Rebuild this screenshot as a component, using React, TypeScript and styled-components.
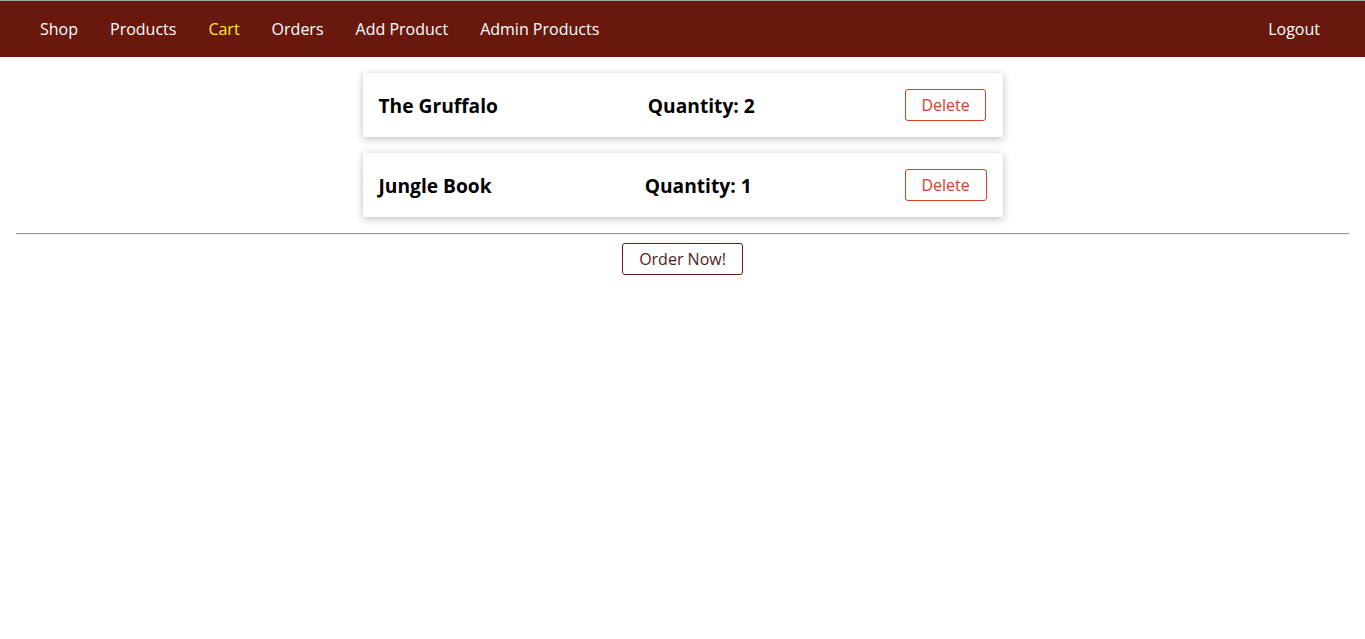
import React from "react";
import styled, { createGlobalStyle } from "styled-components";

const GlobalStyle = createGlobalStyle`
  html, body { margin: 0; padding: 0; background: #fff; }
  body { font-family: "Open Sans", "Noto Sans", sans-serif; border-top: 1px solid #a3a3a3; }
  * { box-sizing: border-box; }
`;

const Header = styled.header`
  width: 100%;
  height: 56px;
  background-color: #68180c;
  padding: 0 24px;
  display: flex;
  align-items: center;
`;

const Nav = styled.nav`
  height: 100%;
  display: flex;
  align-items: center;
  flex: 1;
  justify-content: space-between;
`;

const ItemList = styled.ul`
  list-style: none;
  margin: 0;
  padding: 0;
  display: flex;
`;

const Item = styled.li`
  margin: 0 16px;
  padding: 0;
`;

const NavLink = styled.a<{ $active?: boolean }>`
  text-decoration: none;
  font-size: 16px;
  color: ${(p) => (p.$active ? "#ffeb3b" : "#ffffff")};
`;

const LogoutButton = styled.button`
  font: inherit;
  font-size: 16px;
  background: transparent;
  border: none;
  color: #fff;
  padding: 0;
  margin: 0 5px 0 16px;
  cursor: pointer;
`;

const Main = styled.main`
  padding: 16px;
  margin: auto;
`;

const CartList = styled.ul`
  list-style: none;
  margin: 0 auto;
  padding: 0;
  width: 640px;
  max-width: 90%;
`;

const CartItem = styled.li`
  display: flex;
  justify-content: space-between;
  align-items: center;
  padding: 16px;
  box-shadow: 0 2px 8px rgba(0, 0, 0, 0.26);
  margin-bottom: 16px;
  height: 64px;
`;

const Title = styled.h1`
  margin: 0 16px 0 0;
  font-size: 19.2px;
  font-weight: 700;
  color: #000;
`;

const Quantity = styled.h2`
  margin: 0 16px 0 0;
  font-size: 19.2px;
  font-weight: 700;
  color: #000;
`;

const Btn = styled.button<{ $danger?: boolean }>`
  font: inherit;
  font-size: 16px;
  border: 1px solid ${(p) => (p.$danger ? "#d5402b" : "#68180c")};
  color: ${(p) => (p.$danger ? "#d5402b" : "#4f1c24")};
  background: #fff;
  border-radius: 3px;
  cursor: pointer;
  padding: 4px 15.75px;
  line-height: 22px;
`;

const Divider = styled.hr`
  margin: 0 0 8px 0;
  border: none;
  border-top: 1px solid #9a9a9a;
  border-bottom: 1px solid #eee;
`;

const Centered = styled.div`
  text-align: center;
`;

const items = [
  { title: "The Gruffalo", qty: 2 },
  { title: "Jungle Book", qty: 1 },
];

export default function App() {
  return (
    <>
      <GlobalStyle />
      <Header>
        <Nav>
          <ItemList>
            <Item><NavLink href="#">Shop</NavLink></Item>
            <Item><NavLink href="#">Products</NavLink></Item>
            <Item><NavLink href="#" $active>Cart</NavLink></Item>
            <Item><NavLink href="#">Orders</NavLink></Item>
            <Item><NavLink href="#">Add Product</NavLink></Item>
            <Item><NavLink href="#">Admin Products</NavLink></Item>
          </ItemList>
          <ItemList>
            <Item><LogoutButton>Logout</LogoutButton></Item>
          </ItemList>
        </Nav>
      </Header>
      <Main>
        <CartList>
          {items.map((it) => (
            <CartItem key={it.title}>
              <Title>{it.title}</Title>
              <Quantity>Quantity: {it.qty}</Quantity>
              <Btn $danger>Delete</Btn>
            </CartItem>
          ))}
        </CartList>
        <Divider />
        <Centered>
          <Btn>Order Now!</Btn>
        </Centered>
      </Main>
    </>
  );
}
